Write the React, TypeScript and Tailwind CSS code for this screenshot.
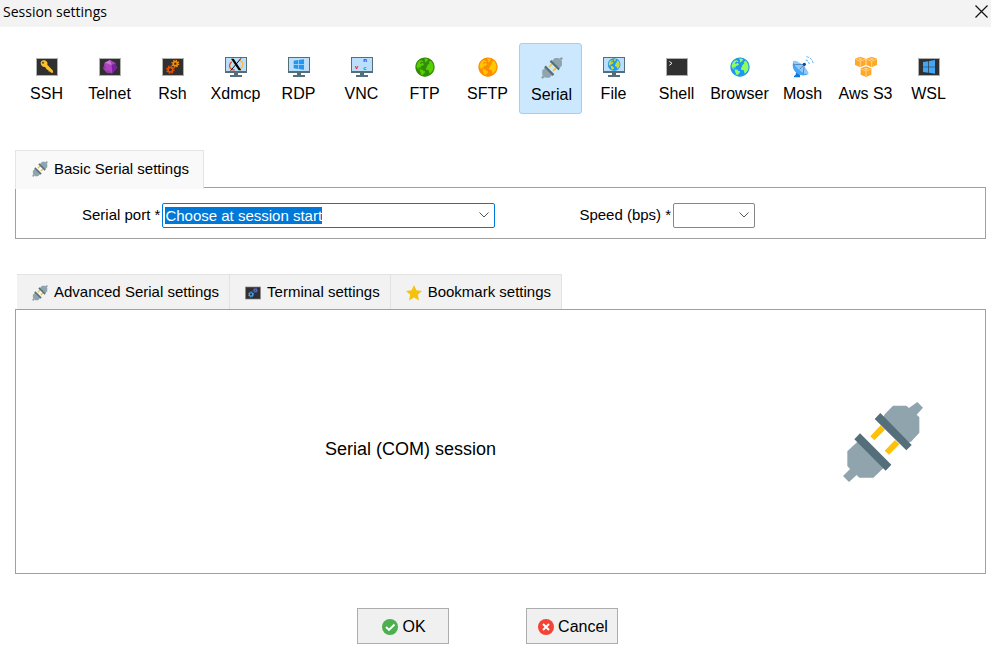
import React from 'react';
import clsx from 'clsx';
import { FcGlobe } from 'react-icons/fc';

interface IconProps {
  className?: string;
}

const ICON = 'h-[22px] w-[22px] shrink-0';

const PlugIcon: React.FC<IconProps> = ({ className }) => (
  <svg viewBox="0 0 240 240" className={className} aria-hidden="true">
    <path
      fill="#90a4ae"
      d="M120 46 126 36 150 11H190L198 18 223 0 240 17 221 38 229 46V92L204 119 194 123Z M45 118 13 148V192L21 201 0 222 18 240 41 219 49 227H91L124 196Z"
    />
    <path fill="#ffc107" d="M113 70 126 83 94 115 82 103Z M156 114 169 127 138 158 125 146Z" />
    <path fill="#546e7a" d="M112 33 206 129 190 145 95 51Z M51 94 145 188 128 206 34 112Z" />
  </svg>
);

const Screen: React.FC<{ children: React.ReactNode; className?: string }> = ({ children, className = ICON }) => (
  <svg viewBox="0 0 66 66" className={className} aria-hidden="true">
    <path fill="#b0b0b0" d="M0 6H66V60H0Z" />
    <path fill="#303030" d="M3 9H63V57H3Z" />
    {children}
  </svg>
);

const Monitor: React.FC<{ children: React.ReactNode }> = ({ children }) => (
  <svg viewBox="0 0 66 66" className={ICON} aria-hidden="true">
    <path fill="#546e7a" d="M0 3H66V51H0Z M27 51H39V57H27Z M15 57H51V63H15Z" />
    <path fill="#bbdefb" d="M3 6H63V45H3Z" />
    {children}
  </svg>
);

const Gear: React.FC<{ cx: number; cy: number; r: number; color: string }> = ({ cx, cy, r, color }) => (
  <g fill="none" stroke={color}>
    <circle cx={cx} cy={cy} r={r} strokeWidth="5" />
    <circle cx={cx} cy={cy} r={r + 4} strokeWidth="4" strokeDasharray={`${(r + 4) * 0.393} ${(r + 4) * 0.393}`} />
  </g>
);

const KeyIcon = () => (
  <Screen>
    <path fill="#fbc02d" d="M14 21C14 14 20 11 26 13C33 15 36 21 34 26L51 44V50H45L41 46 38 47 37 42 33 41 27 33C20 34 14 28 14 21Z" />
    <circle cx="21" cy="20" r="3" fill="#5d4a18" />
  </Screen>
);

const GemIcon = () => (
  <Screen>
    <path fill="#ab47bc" d="M33 12 50 21 53 36 40 52 24 51 13 38 17 20Z" />
    <path fill="#ce72dc" d="M33 12 38 27 17 20Z" />
    <path fill="#7b1fa2" d="M38 27 50 21 53 36 40 52Z" />
    <path fill="#9c35ae" d="M17 20 22 39 13 38Z M22 39 40 52 24 51Z" />
  </Screen>
);

const XIcon = () => (
  <Monitor>
    <path d="M20 17C8 29 14 42 29 42" fill="none" stroke="#f4511e" strokeWidth="4" />
    <path d="M42 12C58 17 57 34 42 40" fill="none" stroke="#ffb74d" strokeWidth="4" />
    <path d="M48 7 17 44" stroke="#111" strokeWidth="3" />
    <path fill="#000" d="M18 8H26L49 43H41Z" />
  </Monitor>
);

const WinLogo = () => <path fill="#2196f3" d="M17 14 30 12V25H17Z M32 12 48 10V25H32Z M17 27H30V39L17 37Z M32 27H48V41L32 39Z" />;

const VncIcon = () => (
  <Monitor>
    <g fontFamily="Liberation Sans, sans-serif" fontWeight="bold" fontSize="18">
      <text x="12" y="38" fill="#f00">v</text>
      <text x="37" y="18" fill="#22f">n</text>
      <text x="37" y="41" fill="#00b82e">c</text>
    </g>
  </Monitor>
);

const DishIcon = () => (
  <svg viewBox="0 0 66 66" className={ICON} aria-hidden="true">
    <path fill="#1976d2" d="M13 44 24 57V64H6V60L11 56Z" />
    <path fill="#42a5f5" d="M5 15C-2 30 4 47 18 54C29 60 42 59 49 54Z" />
    <path fill="#90caf9" d="M5 15C10 11 26 20 37 32C47 43 52 52 49 54C43 58 27 49 16 37C6 26 2 18 5 15Z" />
    <path d="M5 26 37 25 34 52M23 40 37 25" fill="none" stroke="#3768a8" strokeWidth="2" />
    <circle cx="37" cy="25" r="5" fill="#0d47a1" />
    <path d="M41 12C47 13 50 17 52 24M43 2C55 4 61 11 64 22" fill="none" stroke="#64b5f6" strokeWidth="3" strokeDasharray="8 3" />
  </svg>
);

const Cube: React.FC<{ x: number; y: number }> = ({ x, y }) => (
  <g transform={`translate(${x} ${y})`}>
    <path fill="#ffa726" d="M16 0 32 6V25L16 32 0 25V6Z" />
    <path d="M2 8 16 14 30 8M16 14V31" fill="none" stroke="#ffe6bd" strokeWidth="2" />
    <path fill="#ffd796" d="M16 4 23 7 16 10 9 7Z" />
  </g>
);

const CubesIcon = () => (
  <svg viewBox="0 0 66 66" className={ICON} aria-hidden="true">
    <Cube x={0} y={2} />
    <Cube x={34} y={2} />
    <Cube x={17} y={31} />
  </svg>
);

const sessions: { name: string; icon: React.ReactNode }[] = [
  { name: 'SSH', icon: <KeyIcon /> },
  { name: 'Telnet', icon: <GemIcon /> },
  {
    name: 'Rsh',
    icon: (
      <Screen>
        <Gear cx={40} cy={23} r={6} color="#fb8c00" />
        <Gear cx={25} cy={41} r={7} color="#e65100" />
      </Screen>
    ),
  },
  { name: 'Xdmcp', icon: <XIcon /> },
  {
    name: 'RDP',
    icon: (
      <Monitor>
        <WinLogo />
      </Monitor>
    ),
  },
  { name: 'VNC', icon: <VncIcon /> },
  // the first globe path is the land, the second the sea
  {
    name: 'FTP',
    icon: <FcGlobe className={clsx(ICON, '[&>path]:fill-[#338a0b] [&>path:first-of-type]:fill-[#55d000]')} />,
  },
  {
    name: 'SFTP',
    icon: <FcGlobe className={clsx(ICON, '[&>path]:fill-[#ff8c00] [&>path:first-of-type]:fill-[#ffc800]')} />,
  },
  { name: 'Serial', icon: <PlugIcon className={ICON} /> },
  {
    name: 'File',
    icon: (
      <Monitor>
        <FcGlobe x="12" y="4" size={43} className="[&>path]:fill-[#2196f3] [&>path:first-of-type]:fill-[#c0dc39]" />
      </Monitor>
    ),
  },
  {
    name: 'Shell',
    icon: (
      <Screen>
        <path d="M10 16 18 22 10 28" fill="none" stroke="#eee" strokeWidth="3" />
      </Screen>
    ),
  },
  {
    name: 'Browser',
    icon: <FcGlobe className={clsx(ICON, '[&>path]:fill-[#2196f3] [&>path:first-of-type]:fill-[#8dff5c]')} />,
  },
  { name: 'Mosh', icon: <DishIcon /> },
  { name: 'Aws S3', icon: <CubesIcon /> },
  {
    name: 'WSL',
    icon: (
      <Screen>
        <path fill="#42a5f5" d="M15 18 31 16V32H15Z M33 15 51 12V32H33Z M15 34H31V50L15 48Z M33 34H51V53L33 50Z" />
      </Screen>
    ),
  },
];

const GearsIcon = () => (
  <Screen className="h-4 w-4">
    <Gear cx={43} cy={22} r={5} color="#5c6bc0" />
    <Gear cx={25} cy={39} r={7} color="#42a5f5" />
  </Screen>
);

const StarIcon = () => (
  <svg viewBox="0 0 16 16" className="h-4 w-4" aria-hidden="true">
    <path fill="#f4c20d" d="M8 0 10.4 5.3 16 6 11.8 9.8 13 15.5 8 12.6 3 15.5 4.2 9.8 0 6 5.6 5.3Z" />
  </svg>
);

const advancedTabs = [
  { label: 'Advanced Serial settings', icon: <PlugIcon className="h-4 w-4" /> },
  { label: 'Terminal settings', icon: <GearsIcon /> },
  { label: 'Bookmark settings', icon: <StarIcon /> },
];

const Chevron: React.FC<IconProps> = ({ className }) => (
  <svg viewBox="0 0 10 6" className={clsx('h-[6px] w-[10px]', className)} aria-hidden="true">
    <path d="M0.5 0.5 5 5 9.5 0.5" fill="none" stroke="#555" />
  </svg>
);

const App: React.FC = () => {
  const [active, setActive] = React.useState('Serial');
  const [port, setPort] = React.useState('Choose at session start');
  const portRef = React.useRef<HTMLInputElement>(null);

  React.useEffect(() => {
    portRef.current?.focus();
    portRef.current?.select();
  }, []);

  return (
    <div className="min-h-screen bg-white pb-[21px] font-['Liberation_Sans',Arial,sans-serif] text-[15px] text-black">
      <header className="flex h-[27px] items-center justify-between bg-[#f3f3f3] px-[3px]">
        <h1 className="pb-1 font-['Open_Sans',sans-serif] text-[14px] leading-5">Session settings</h1>
        <button type="button" aria-label="Close" className="pb-[5px]">
          <svg viewBox="0 0 13 13" className="h-[13px] w-[13px]" aria-hidden="true">
            <path d="M0.5 0.5 12.5 12.5M12.5 0.5 0.5 12.5" stroke="#111" strokeWidth="1.2" />
          </svg>
        </button>
      </header>

      <nav className="mt-4 grid grid-cols-15 pr-[31px] pl-[15px]">
        {sessions.map(({ name, icon }) => (
          <button
            key={name}
            type="button"
            aria-pressed={active === name}
            onClick={() => setActive(name)}
            className={clsx(
              'flex h-[71px] flex-col items-center gap-[7px] rounded-[3px] pt-[13px] text-[16px] leading-[18px] whitespace-nowrap',
              active === name && 'border border-[#99d1ff] bg-[#cce8ff] pl-0.5'
            )}
          >
            {icon}
            {name}
          </button>
        ))}
      </nav>

      <main className="pr-[5px] pl-[15px]">
        <section className="mt-9">
          <div role="tablist" className="relative z-10 -mb-0.5 flex">
            <button
              type="button"
              role="tab"
              aria-selected="true"
              className="flex h-[39px] items-center gap-[6px] border border-b-0 border-[#e5e5e5] bg-[#f9f9f9] pr-[14px] pb-0.5 pl-4"
            >
              <PlugIcon className="h-4 w-4" />
              Basic Serial settings
            </button>
          </div>
          <div className="flex h-[52px] items-center border border-[#a0a0a0] pt-1 pl-[66px]">
            <label htmlFor="port">Serial port *</label>
            <div className="ml-0.5 flex h-[25px] w-[333px] items-center rounded-[2px] border border-[#0078d7] pr-[5px] pl-[2px]">
              <input
                id="port"
                ref={portRef}
                value={port}
                onChange={(e) => setPort(e.target.value)}
                className="h-[17px] min-w-0 flex-1 leading-[17px] outline-none selection:bg-[#0078d7] selection:text-white"
              />
              <button type="button" aria-label="Show ports">
                <Chevron />
              </button>
            </div>
            <label htmlFor="speed" className="ml-[84px]">
              Speed (bps) *
            </label>
            <div className="ml-0.5 grid w-[82px] items-center">
              <select
                id="speed"
                defaultValue=""
                className="col-start-1 row-start-1 h-[25px] appearance-none rounded-[2px] border border-[#868686] bg-white pl-1"
              >
                <option value=""></option>
                <option>9600</option>
                <option>19200</option>
                <option>115200</option>
              </select>
              <Chevron className="pointer-events-none col-start-1 row-start-1 mr-[6px] justify-self-end" />
            </div>
          </div>
        </section>

        <section className="mt-[35px]">
          <div role="tablist" className="flex pl-[2px]">
            {advancedTabs.map(({ label, icon }) => (
              <button
                key={label}
                type="button"
                role="tab"
                aria-selected="false"
                className="flex h-[35px] items-center gap-[6px] border-t border-r border-[#e2e2e2] bg-[#f2f2f2] pt-px pr-[10px] pl-[15px]"
              >
                {icon}
                {label}
              </button>
            ))}
          </div>
          <div className="flex h-[265px] items-center border border-[#a0a0a0] pr-[62px]">
            <p className="flex-1 pt-[14px] pr-[38px] text-center text-[18px] leading-6">Serial (COM) session</p>
            <PlugIcon className="h-20 w-20" />
          </div>
        </section>
      </main>

      <footer className="mt-[34px] flex justify-center gap-[77px] pr-4 text-[16px]">
        <button
          type="submit"
          className="flex h-9 w-[92px] items-center justify-center gap-1 border border-[#adadad] bg-[#f0f0f0] pt-px pl-0.5"
        >
          <svg viewBox="0 0 16 16" className="h-4 w-4" aria-hidden="true">
            <circle cx="8" cy="8" r="8" fill="#4caf50" />
            <path d="M4 8 7 11 12.500 5.500" fill="none" stroke="#fff" strokeWidth="1.8" />
          </svg>
          OK
        </button>
        <button
          type="button"
          className="flex h-9 w-[92px] items-center justify-center gap-1 border border-[#adadad] bg-[#f0f0f0] pt-px pl-0.5"
        >
          <svg viewBox="0 0 16 16" className="h-4 w-4" aria-hidden="true">
            <circle cx="8" cy="8" r="8" fill="#f44336" />
            <path d="M5 5 11 11M11 5 5 11" stroke="#fff" strokeWidth="2" />
          </svg>
          Cancel
        </button>
      </footer>
    </div>
  );
};

export default App;
